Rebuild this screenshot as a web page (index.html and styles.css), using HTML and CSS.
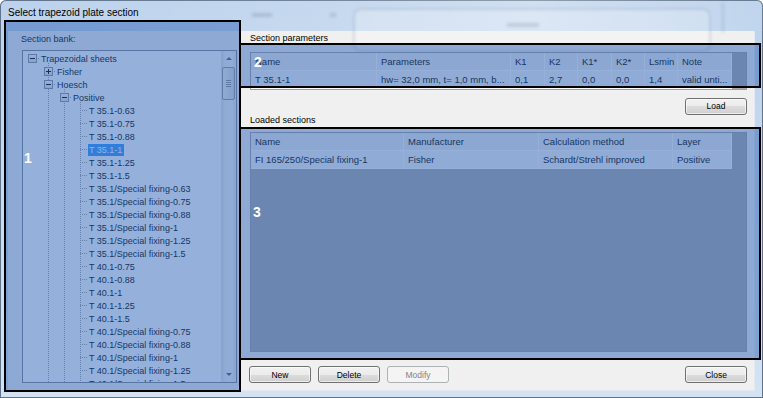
FILE: index.html
```html
<!DOCTYPE html>
<html lang="en">
<head>
    <meta charset="UTF-8">
    <title>Select trapezoid plate section</title>
    <link rel="stylesheet" href="styles.css">
</head>
<body>

<div class="window">
    <div class="titlebar">
        <div class="ghost ghost-tab"></div>
        <div class="ghost ghost-dot"></div>
        <div class="ghost ghost-frame"><div class="ghost-text"></div></div>
        <div class="ghost ghost-line"></div>
        <span class="title">Select trapezoid plate section</span>
    </div>

    <div class="client">
        <div class="bank">
            <div class="label bank-label">Section bank:</div>
            <div class="tree">
                <div class="tree-list">
                    <div class="node lv0"><span class="ex"><b class="box"></b></span><span class="t">Trapezoidal sheets</span></div>
                    <div class="node lv1"><span class="ex"><b class="box plus"></b></span><span class="t">Fisher</span></div>
                    <div class="node lv1"><span class="ex"><b class="box"></b></span><span class="t">Hoesch</span></div>
                    <div class="node lv2"><span class="ex"><b class="box"></b></span><span class="t">Positive</span></div>
                    <div class="node lv3"><span class="ex"></span><span class="t">T 35.1-0.63</span></div>
                    <div class="node lv3"><span class="ex"></span><span class="t">T 35.1-0.75</span></div>
                    <div class="node lv3"><span class="ex"></span><span class="t">T 35.1-0.88</span></div>
                    <div class="node lv3 sel"><span class="ex"></span><span class="t">T 35.1-1</span></div>
                    <div class="node lv3"><span class="ex"></span><span class="t">T 35.1-1.25</span></div>
                    <div class="node lv3"><span class="ex"></span><span class="t">T 35.1-1.5</span></div>
                    <div class="node lv3"><span class="ex"></span><span class="t">T 35.1/Special fixing-0.63</span></div>
                    <div class="node lv3"><span class="ex"></span><span class="t">T 35.1/Special fixing-0.75</span></div>
                    <div class="node lv3"><span class="ex"></span><span class="t">T 35.1/Special fixing-0.88</span></div>
                    <div class="node lv3"><span class="ex"></span><span class="t">T 35.1/Special fixing-1</span></div>
                    <div class="node lv3"><span class="ex"></span><span class="t">T 35.1/Special fixing-1.25</span></div>
                    <div class="node lv3"><span class="ex"></span><span class="t">T 35.1/Special fixing-1.5</span></div>
                    <div class="node lv3"><span class="ex"></span><span class="t">T 40.1-0.75</span></div>
                    <div class="node lv3"><span class="ex"></span><span class="t">T 40.1-0.88</span></div>
                    <div class="node lv3"><span class="ex"></span><span class="t">T 40.1-1</span></div>
                    <div class="node lv3"><span class="ex"></span><span class="t">T 40.1-1.25</span></div>
                    <div class="node lv3"><span class="ex"></span><span class="t">T 40.1-1.5</span></div>
                    <div class="node lv3"><span class="ex"></span><span class="t">T 40.1/Special fixing-0.75</span></div>
                    <div class="node lv3"><span class="ex"></span><span class="t">T 40.1/Special fixing-0.88</span></div>
                    <div class="node lv3"><span class="ex"></span><span class="t">T 40.1/Special fixing-1</span></div>
                    <div class="node lv3"><span class="ex"></span><span class="t">T 40.1/Special fixing-1.25</span></div>
                    <div class="node lv3"><span class="ex"></span><span class="t">T 40.1/Special fixing-1.5</span></div>
                </div>
                <div class="vscroll">
                    <div class="sb-btn"><i class="arr up"></i></div>
                    <div class="sb-track">
                        <div class="sb-thumb"><i class="grip"></i></div>
                    </div>
                    <div class="sb-btn"><i class="arr down"></i></div>
                </div>
            </div>
        </div>

        <div class="main">
            <div class="label">Section parameters</div>
            <div class="grid params">
                <div class="row head">
                    <div class="cell">Name</div>
                    <div class="cell">Parameters</div>
                    <div class="cell">K1</div>
                    <div class="cell">K2</div>
                    <div class="cell">K1*</div>
                    <div class="cell">K2*</div>
                    <div class="cell">Lsmin</div>
                    <div class="cell">Note</div>
                </div>
                <div class="row">
                    <div class="cell">T 35.1-1</div>
                    <div class="cell">hw= 32,0 mm, t= 1,0 mm, b...</div>
                    <div class="cell">0,1</div>
                    <div class="cell">2,7</div>
                    <div class="cell">0,0</div>
                    <div class="cell">0,0</div>
                    <div class="cell">1,4</div>
                    <div class="cell">valid unti...</div>
                </div>
            </div>

            <div class="mid">
                <div class="label">Loaded sections</div>
                <button class="btn">Load</button>
            </div>

            <div class="grid loaded">
                <div class="row head">
                    <div class="cell">Name</div>
                    <div class="cell">Manufacturer</div>
                    <div class="cell">Calculation method</div>
                    <div class="cell">Layer</div>
                </div>
                <div class="row">
                    <div class="cell">FI 165/250/Special fixing-1</div>
                    <div class="cell">Fisher</div>
                    <div class="cell">Schardt/Strehl improved</div>
                    <div class="cell">Positive</div>
                </div>
            </div>

            <div class="actions">
                <button class="btn">New</button>
                <button class="btn">Delete</button>
                <button class="btn" disabled>Modify</button>
                <button class="btn close">Close</button>
            </div>
        </div>
    </div>

    <div class="mark mark-1"><span>1</span></div>
    <div class="mark mark-2"><span>2</span></div>
    <div class="mark mark-3"><span>3</span></div>
</div>

</body>
</html>
```

FILE: styles.css
```css
body {
    margin: 0;
    font-family: "Liberation Sans", Arial, sans-serif;
    background-color: #fff;
}
.window {
    position: relative;
    width: 763px;
    height: 398px;
    display: flex;
    flex-direction: column;
    background: linear-gradient(to bottom, #bcd2ec, #c7dbf0 50%, #d3e3f4);
    box-shadow: inset 0 0 0 1px #60738b;
    border-radius: 6px 6px 0 0;
    overflow: hidden;
}

/* title bar (aero glass) */
.titlebar {
    position: relative;
    height: 31px;
    flex: none;
    background: linear-gradient(to right, rgba(255, 255, 255, 0) 0%, rgba(255, 255, 255, 0.12) 40%, rgba(255, 255, 255, 0.3) 70%, rgba(255, 255, 255, 0.05) 100%);
}
.title {
    position: relative;
    display: block;
    padding: 7px 0 0 8px;
    font-size: 10px;
    line-height: 12px;
    color: #000;
}
.ghost {
    position: absolute;
    filter: blur(1.5px);
}
.ghost-tab {
    left: 252px;
    top: 13px;
    width: 20px;
    height: 4px;
    background-color: rgba(90, 100, 120, 0.22);
}
.ghost-dot {
    left: 330px;
    top: 13px;
    width: 6px;
    height: 4px;
    background-color: rgba(90, 100, 120, 0.2);
}
.ghost-frame {
    left: 353px;
    top: 8px;
    width: 354px;
    height: 40px;
    border: 2px solid rgba(120, 140, 170, 0.28);
    border-radius: 8px;
    background-color: rgba(255, 255, 255, 0.22);
}
.ghost-text {
    position: absolute;
    left: 152px;
    top: 13px;
    width: 32px;
    height: 4px;
    background-color: rgba(90, 100, 120, 0.2);
}
.ghost-line {
    left: 722px;
    top: 3px;
    width: 2px;
    height: 30px;
    background-color: rgba(120, 140, 170, 0.25);
}

.client {
    flex: 1;
    display: flex;
    margin: 0 8px 7px 8px;
    background-color: #f0f0f0;
    border-right: 1px solid #e2e9f1;
    border-bottom: 1px solid #e2e9f1;
    min-height: 0;
}
.label {
    font-size: 9px;
    line-height: 12px;
    color: #000;
    white-space: nowrap;
}

/* left: section bank */
.bank {
    width: 233px;
    flex: none;
    box-sizing: border-box;
    padding: 2px 4px 7px 14px;
    display: flex;
    flex-direction: column;
}
.bank-label {
    margin-left: -1px;
}
.tree {
    flex: 1;
    display: flex;
    margin-top: 5px;
    border: 1px solid #828790;
    background-color: #fff;
    min-height: 0;
}
.tree-list {
    flex: 1;
    overflow: hidden;
    padding-top: 1px;
    background-image:
        repeating-linear-gradient(to bottom, #a0a0a0 0 1px, transparent 1px 2px),
        repeating-linear-gradient(to bottom, #a0a0a0 0 1px, transparent 1px 2px),
        repeating-linear-gradient(to bottom, #a0a0a0 0 1px, transparent 1px 2px);
    background-size: 1px 400px;
    background-position: 25px 12px, 41px 38px, 57px 51px;
    background-repeat: no-repeat;
}
.node {
    height: 13px;
    display: flex;
    align-items: center;
    white-space: nowrap;
    font-size: 9px;
    color: #000;
    background-image: repeating-linear-gradient(to right, #a0a0a0 0 1px, transparent 1px 2px);
    background-size: 7px 1px;
    background-repeat: no-repeat;
}
.lv0 { padding-left: 1px; background-position: 9px 6px; }
.lv1 { padding-left: 17px; background-position: 25px 6px; }
.lv2 { padding-left: 33px; background-position: 41px 6px; }
.lv3 { padding-left: 49px; background-position: 57px 6px; }
.ex {
    width: 16px;
    height: 13px;
    flex: none;
}
.box {
    display: block;
    width: 9px;
    height: 9px;
    margin: 2px 0 0 4px;
    box-sizing: border-box;
    border: 1px solid #919191;
    background:
        linear-gradient(#000, #000) center / 5px 1px no-repeat,
        linear-gradient(to bottom, #fff, #e4e4e4);
}
.box.plus {
    background:
        linear-gradient(#000, #000) center / 5px 1px no-repeat,
        linear-gradient(#000, #000) center / 1px 5px no-repeat,
        linear-gradient(to bottom, #fff, #e4e4e4);
}
.t {
    padding: 0 2px 0 1px;
    line-height: 12px;
}
.sel .t {
    background-color: #3399ff;
    color: #fff;
}

.vscroll {
    width: 15px;
    flex: none;
    display: flex;
    flex-direction: column;
    background: linear-gradient(to right, #e3e3e3, #f4f4f4 30%, #f4f4f4 70%, #e9e9e9);
}
.sb-btn {
    height: 15px;
    flex: none;
    display: flex;
    align-items: center;
    justify-content: center;
}
.arr {
    width: 0;
    height: 0;
    border-left: 3px solid transparent;
    border-right: 3px solid transparent;
}
.arr.up {
    border-bottom: 3px solid #4d6185;
}
.arr.down {
    border-top: 3px solid #4d6185;
}
.sb-track {
    flex: 1;
    padding: 1px 1px 0 1px;
}
.sb-thumb {
    height: 33px;
    box-sizing: border-box;
    border: 1px solid #979797;
    border-radius: 2px;
    background: linear-gradient(to right, #f3f3f3, #dcdcdc);
    display: flex;
    align-items: center;
    justify-content: center;
}
.grip {
    width: 5px;
    height: 7px;
    background: repeating-linear-gradient(to bottom, #8a8a8a 0 1px, #f6f6f6 1px 2px);
}

/* right: parameters + loaded sections */
.main {
    flex: 1;
    min-width: 0;
    display: flex;
    flex-direction: column;
    padding: 1px 7px 7px 9px;
}
.grid {
    box-sizing: border-box;
    border: 1px solid #a0a0a0;
    background-color: #ababab;
    font-size: 9.5px;
    color: #000;
    overflow: hidden;
}
.params {
    height: 38px;
    margin-top: 8px;
}
.loaded {
    height: 221px;
    margin-top: 6px;
}
.row {
    display: grid;
    height: 18px;
}
.params .row {
    grid-template-columns: 126px 134px 34px 33px 34px 33px 33px 54px;
}
.loaded .row {
    grid-template-columns: 153px 135px 134px 59px;
}
.cell {
    box-sizing: border-box;
    padding-left: 4px;
    line-height: 17px;
    white-space: nowrap;
    overflow: hidden;
    background-color: #f5f5f5;
    border-right: 1px solid #fff;
    border-bottom: 1px solid #fff;
}
.head .cell {
    background-color: #ececec;
}

.mid {
    height: 28px;
    margin-top: 8px;
    display: flex;
    justify-content: space-between;
}
.mid .label {
    align-self: flex-end;
}
.btn {
    width: 62px;
    height: 17px;
    box-sizing: border-box;
    padding: 0;
    border: 1px solid #707070;
    border-radius: 3px;
    background: linear-gradient(to bottom, #f2f2f2 0%, #ebebeb 50%, #dddddd 50%, #cfcfcf 100%);
    box-shadow: inset 0 0 0 1px rgba(255, 255, 255, 0.6);
    font-family: "Liberation Sans", Arial, sans-serif;
    font-size: 8.5px;
    color: #000;
}
.btn:disabled {
    border-color: #adb2b5;
    background: #f4f4f4;
    box-shadow: none;
    color: #838383;
}
.actions {
    display: flex;
    gap: 7px;
    margin: 14px 0 0 -1px;
}
.actions .close {
    margin-left: auto;
}

/* numbered annotation boxes over the dialog */
.mark {
    position: absolute;
    box-sizing: border-box;
    border: 2px solid #000;
    background-color: rgba(44, 100, 184, 0.5);
}
.mark span {
    position: absolute;
    font-size: 14px;
    line-height: 14px;
    font-weight: bold;
    color: #fff;
}
.mark-1 { left: 4px; top: 20px; width: 237px; height: 372px; }
.mark-1 span { left: 18px; top: 129px; }
.mark-2 { left: 239px; top: 43px; width: 522px; height: 45px; }
.mark-2 span { left: 13px; top: 10px; }
.mark-3 { left: 239px; top: 127px; width: 522px; height: 233px; }
.mark-3 span { left: 12px; top: 76px; }
```
